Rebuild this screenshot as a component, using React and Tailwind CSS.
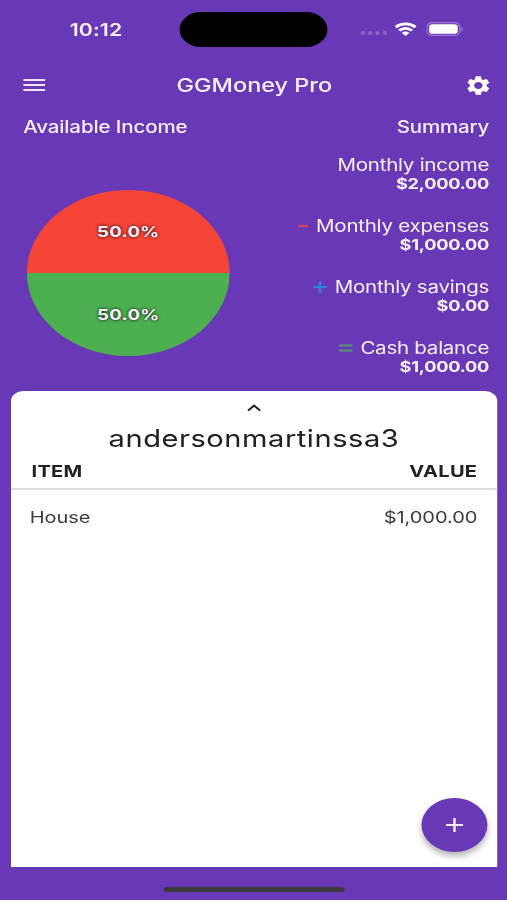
import React from 'react';

const summary = [
   { label: 'Monthly income', value: '$2,000.00' },
   { label: 'Monthly expenses', value: '$1,000.00', sign: 'minus' },
   { label: 'Monthly savings', value: '$0.00', sign: 'plus' },
   { label: 'Cash balance', value: '$1,000.00', sign: 'equal' },
];

const items = [{ name: 'House', value: '$1,000.00' }];

const signs = {
   minus: { d: 'M4 8H12', color: '#dc4350', box: 'mr-[3px]' },
   plus: { d: 'M2.5 8H13.5M8 2.2V13.8', color: '#2f86e0', box: 'mr-[4px]' },
   equal: { d: 'M2.5 5.5H13.5M2.5 10.5H13.5', color: '#539a70', box: 'mr-[4px]' },
};

const Sign = ({ type }) => {
   const sign = signs[type];
   return (
      <svg viewBox="0 0 16 16" className={`mb-[2px] h-4 w-4 ${sign.box}`}>
         <path d={sign.d} stroke={sign.color} strokeWidth="1.9" fill="none" />
      </svg>
   );
};

const StatusBar = () => (
   <div className="flex h-[59px] items-start">
      <div className="w-[147.4px] pl-[57px] pt-[17px] text-[17.4px] leading-[25px] font-semibold tracking-[0.1px]">10:12</div>
      <div className="mt-3 h-[35px] w-[121px] rounded-full bg-black" />
      <div className="flex h-[57px] items-center pl-[25.5px]">
         <svg viewBox="0 0 24 8" className="mt-[9px] mr-[5px] h-2 w-6">
            {[3, 9, 15, 21].map((x) => (
               <circle key={x} cx={x} cy="4" r="1.9" fill="#8e62cb" />
            ))}
         </svg>
         <svg viewBox="0 0 18 14" className="ml-[0.5px] h-[14px] w-[18px]" fill="none" stroke="#fff" strokeWidth="2.7">
            <path d="M0.9 5.2A11.6 11.6 0 0 1 17.1 5.2" />
            <path d="M3.8 8.6A7.4 7.4 0 0 1 14.2 8.6" />
            <path d="M9 14L5.9 10.9A4.4 4.4 0 0 1 12.1 10.9Z" fill="#fff" stroke="none" />
         </svg>
         <svg viewBox="0 0 31 14" className="ml-[7.5px] h-[14px] w-[31px]">
            <rect x="0.6" y="0.6" width="26.8" height="12.8" rx="4.2" fill="none" stroke="#a07bd6" strokeWidth="1.1" />
            <rect x="2.3" y="2.3" width="23.4" height="9.4" rx="2.8" fill="#fff" />
            <path d="M28.7 5V9.2Q30 8.6 30 7.1Q30 5.6 28.7 5Z" fill="#a988da" />
         </svg>
      </div>
   </div>
);

const TopBar = () => (
   <div className="flex h-[52px] items-center justify-between pl-[19px] pr-[11.6px]">
      <svg viewBox="0 0 18 12" className="h-3 w-[18px]">
         <path d="M0 1H18M0 6H18M0 11H18" stroke="#f1e6fc" strokeWidth="2" />
      </svg>
      <h1 className="mr-px text-[19.2px] leading-6 font-medium">GGMoney Pro</h1>
      <svg viewBox="0 0 24 24" className="h-[23px] w-[23px]" fill="#fff">
         <path d="M19.14 12.94c.04-.3.06-.61.06-.94 0-.32-.02-.64-.07-.94l2.03-1.58c.18-.14.23-.41.12-.61l-1.92-3.32c-.12-.22-.37-.29-.59-.22l-2.39.96c-.5-.38-1.03-.7-1.62-.94l-.36-2.54c-.04-.24-.24-.41-.48-.41h-3.84c-.24 0-.43.17-.47.41l-.36 2.54c-.59.24-1.13.57-1.62.94l-2.39-.96c-.22-.08-.47 0-.59.22L2.74 8.87c-.12.21-.08.47.12.61l2.03 1.58c-.05.3-.09.63-.09.94s.02.64.07.94l-2.03 1.58c-.18.14-.23.41-.12.61l1.92 3.32c.12.22.37.29.59.22l2.39-.96c.5.38 1.03.7 1.62.94l.36 2.54c.05.24.24.41.48.41h3.84c.24 0 .44-.17.47-.41l.36-2.54c.59-.24 1.13-.56 1.62-.94l2.39.96c.22.08.47 0 .59-.22l1.92-3.32c.12-.22.07-.47-.12-.61l-2.01-1.58zM12 15.6c-1.98 0-3.6-1.62-3.6-3.6s1.62-3.6 3.6-3.6 3.6 1.62 3.6 3.6-1.62 3.6-3.6 3.6z" />
      </svg>
   </div>
);

const IncomeChart = () => (
   <div className="mt-[53px] ml-[2.5px] flex h-[166px] w-[166px] flex-col overflow-hidden rounded-full text-[15.2px] font-bold tracking-[0.25px] [text-shadow:0_0_3px_#000]">
      <div className="flex h-[83px] items-center justify-center bg-[#f64436] pt-px pl-px">50.0%</div>
      <div className="flex h-[83px] items-center justify-center bg-[#4caf50] pt-px pl-px">50.0%</div>
   </div>
);

const Summary = () => (
   <div className="flex flex-col items-end">
      <h2 className="text-[16.8px] leading-5 font-medium tracking-[-0.14px]">Summary</h2>
      <div className="mt-[19px] flex flex-col gap-6">
         {summary.map((row) => (
            <div key={row.label} className="flex flex-col items-end">
               <div className="flex h-5 items-center text-[16.8px] tracking-[-0.2px]">
                  {row.sign && <Sign type={row.sign} />}
                  {row.label}
               </div>
               <div className="h-[17px] text-[14.9px] leading-[17px] font-bold tracking-[-0.18px]">{row.value}</div>
            </div>
         ))}
      </div>
   </div>
);

const ItemsCard = () => (
   <div className="relative mr-[8.3px] ml-[9px] mt-[14px] flex h-[476px] flex-col rounded-t-[10px] bg-white text-[#212121]">
      <svg viewBox="0 0 12 8" className="mx-auto mt-[13px] h-2 w-3">
         <path d="M1 6.6L6 1.6L11 6.6" fill="none" stroke="#212121" strokeWidth="1.8" />
      </svg>
      <div className="mt-[11px] text-center text-[23.8px] leading-8 tracking-[0.44px]">andersonmartinssa3</div>
      <div className="flex h-[35px] items-center justify-between border-b-2 border-[#dcdcdc] pr-4 pl-[16.8px] pb-px text-[16.4px] font-bold tracking-[0.25px]">
         <span>ITEM</span>
         <span>VALUE</span>
      </div>
      {items.map((item) => (
         <div key={item.name} className="flex h-[54px] items-center justify-between pr-4 pl-[15.4px] text-[16.4px] tracking-[-0.05px] text-[#3c3c3c]">
            <span>{item.name}</span>
            <span>{item.value}</span>
         </div>
      ))}
      <button
         type="button"
         className="absolute right-[7.7px] bottom-[15px] flex h-[54px] w-[54px] items-center justify-center rounded-full bg-[#6938b6] shadow-[0_4px_6px_rgba(0,0,0,0.3)]"
      >
         <svg viewBox="0 0 14 14" className="h-[14px] w-[14px]">
            <path d="M0 7H14M7 0V14" stroke="#f6edff" strokeWidth="2" />
         </svg>
      </button>
   </div>
);

const App = () => {
   return (
      <div className="h-[900px] w-[507px] overflow-hidden bg-[#6938b6]">
         <div className="flex h-[900px] w-[415px] origin-top-left scale-x-[1.2217] flex-col font-['Inter',sans-serif] text-[#f8f0ff]">
            <StatusBar />
            <TopBar />
            <div className="flex h-[266px] justify-between pt-[6px] pl-[19px] pr-[14.6px]">
               <div>
                  <h2 className="text-[16.8px] leading-5 font-medium tracking-[-0.1px]">Available Income</h2>
                  <IncomeChart />
               </div>
               <Summary />
            </div>
            <ItemsCard />
            <div className="mx-auto mt-5 h-[5px] w-[148px] rounded-full bg-[#3b3838]" />
         </div>
      </div>
   );
};

export default App;
